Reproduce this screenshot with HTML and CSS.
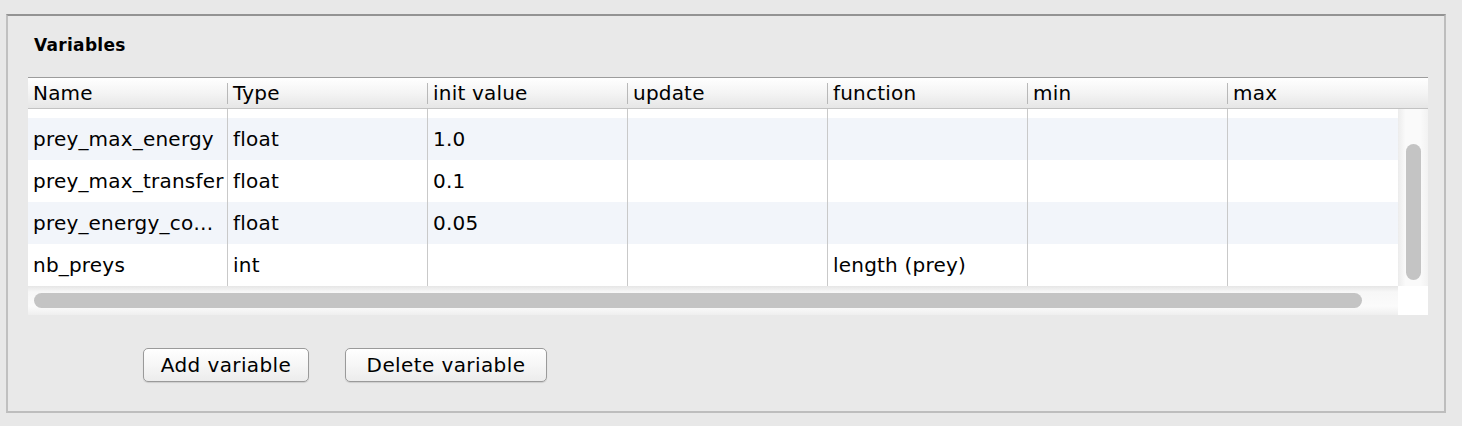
FILE: index.html
```html
<!DOCTYPE html>
<html>
<head>
<meta charset="utf-8">
<link rel="stylesheet" href="styles.css">
</head>
<body>
<div class="panel">
  <div class="title">Variables</div>
  <div class="table">
    <div class="thead">
      <div class="th"><span class="lbl">Name</span><span class="sep"></span></div>
      <div class="th"><span class="lbl">Type</span><span class="sep"></span></div>
      <div class="th"><span class="lbl">init value</span><span class="sep"></span></div>
      <div class="th"><span class="lbl">update</span><span class="sep"></span></div>
      <div class="th"><span class="lbl">function</span><span class="sep"></span></div>
      <div class="th"><span class="lbl">min</span><span class="sep"></span></div>
      <div class="th"><span class="lbl">max</span></div>
    </div>
    <div class="tbody">
      <div class="viewport">
        <div class="row partial">
          <div class="td"></div><div class="td"></div><div class="td"></div><div class="td"></div><div class="td"></div><div class="td"></div><div class="td"></div>
        </div>
        <div class="row odd">
          <div class="td">prey_max_energy</div><div class="td">float</div><div class="td">1.0</div><div class="td"></div><div class="td"></div><div class="td"></div><div class="td"></div>
        </div>
        <div class="row">
          <div class="td">prey_max_transfer</div><div class="td">float</div><div class="td">0.1</div><div class="td"></div><div class="td"></div><div class="td"></div><div class="td"></div>
        </div>
        <div class="row odd">
          <div class="td">prey_energy_co…</div><div class="td">float</div><div class="td">0.05</div><div class="td"></div><div class="td"></div><div class="td"></div><div class="td"></div>
        </div>
        <div class="row">
          <div class="td">nb_preys</div><div class="td">int</div><div class="td"></div><div class="td"></div><div class="td">length (prey)</div><div class="td"></div><div class="td"></div>
        </div>
      </div>
      <div class="vscroll"><div class="vthumb"></div></div>
      <div class="hscroll"><div class="hthumb"></div></div>
      <div class="corner"></div>
    </div>
  </div>
  <div class="buttons">
    <button class="btn btn-add">Add variable</button>
    <button class="btn btn-del">Delete variable</button>
  </div>
</div>
</body>
</html>
```

FILE: styles.css
```css
html, body {
  margin: 0;
  background: #e8e8e8;
}
body {
  padding: 14px 16px 0 6px;
  font-family: "DejaVu Sans", "Liberation Sans", sans-serif;
  color: #000;
}
.panel {
  width: 1436px;
  height: 395px;
  box-sizing: content-box;
  border-top: 2px solid #939393;
  border-left: 2px solid #c0c0c0;
  border-right: 2px solid #bdbdbd;
  border-bottom: 2px solid #bdbdbd;
  background: #e9e9e9;
  padding: 0;
  display: flex;
  flex-direction: column;
}
.title {
  margin: 19px 0 0 26px;
  height: 20px;
  line-height: 20px;
  font-size: 17px;
  font-weight: bold;
  letter-spacing: 0.3px;
}
.table {
  margin: 22px 0 0 20px;
  width: 1400px;
  border-top: 1px solid #9c9c9c;
  background: #fff;
}
.thead {
  display: grid;
  grid-template-columns: repeat(7, 200px);
  height: 30px;
  background: linear-gradient(#ffffff, #f4f4f4 50%, #e6e6e6);
  border-bottom: 1px solid #c2c2c2;
}
.th {
  display: flex;
  align-items: center;
  font-size: 20px;
  letter-spacing: 0.2px;
}
.th .lbl {
  flex: 1;
  padding-left: 5px;
  white-space: nowrap;
}
.th .sep {
  width: 1px;
  height: 21px;
  background: #b8b8b8;
}
.tbody {
  display: grid;
  grid-template-columns: 1370px 30px;
  grid-template-rows: 177px 29px;
}
.viewport {
  overflow: hidden;
  background: #fff;
}
.row {
  display: grid;
  grid-template-columns: repeat(7, 200px);
  width: 1400px;
  height: 42px;
  background: #fff;
}
.row.partial {
  height: 9px;
}
.row.odd {
  background: #f2f5fa;
}
.td {
  border-right: 1px solid #c9c9c9;
  padding-left: 5px;
  display: flex;
  align-items: center;
  font-size: 20px;
  letter-spacing: 0.2px;
  white-space: nowrap;
  overflow: hidden;
}
.vscroll {
  background: linear-gradient(90deg, #ececec, #fafafa 25%, #fafafa 75%, #f2f2f2);
  display: flex;
  flex-direction: column;
  align-items: center;
  padding-top: 35px;
}
.vthumb {
  width: 15px;
  height: 136px;
  border-radius: 8px;
  background: #c4c4c4;
}
.hscroll {
  background: linear-gradient(#e6e6e6, #f7f7f7 20%, #fbfbfb 70%, #efefef);
  display: flex;
  align-items: center;
  padding-left: 6px;
}
.hthumb {
  width: 1328px;
  height: 15px;
  border-radius: 8px;
  background: #c4c4c4;
}
.corner {
  background: #fff;
}
.buttons {
  display: flex;
  gap: 36px;
  margin: 33px 0 0 135px;
}
.btn {
  height: 34px;
  font-family: "DejaVu Sans", "Liberation Sans", sans-serif;
  font-size: 20px;
  letter-spacing: 0.4px;
  color: #000;
  background: linear-gradient(#ffffff, #f6f6f6 50%, #ececec);
  border: 1px solid #9a9a9a;
  border-radius: 5px;
  box-shadow: 0 1px 1px rgba(0, 0, 0, 0.12);
  padding: 0;
}
.btn-add {
  width: 166px;
}
.btn-del {
  width: 202px;
}
```
